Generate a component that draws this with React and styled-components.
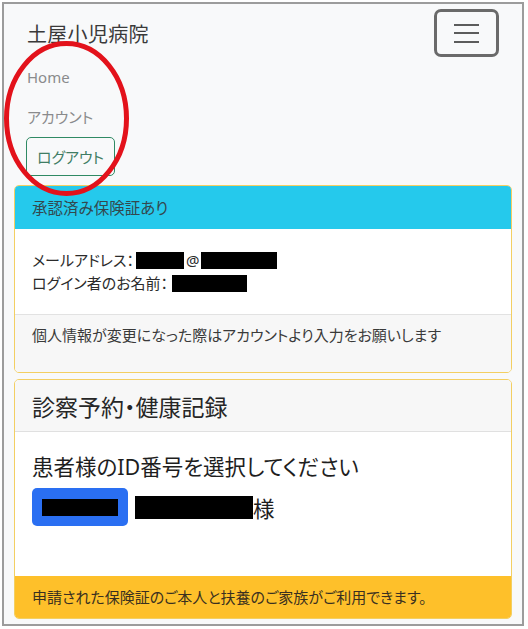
import React from "react";
import styled, { createGlobalStyle } from "styled-components";

const Global = createGlobalStyle`
  html, body { margin: 0; padding: 0; background: #ffffff; }
  body {
    font-family: "Noto Sans", "Noto Sans CJK JP", sans-serif;
    font-feature-settings: "palt";
    color: #212529;
  }
  * { box-sizing: border-box; }
`;

const Frame = styled.div`
  position: relative;
  margin: 2px 0 0 2px;
  width: 522px;
  height: 624px;
  border: 2px solid #9c9c9c;
  background: #f8f9fa;
  overflow: hidden;
`;

const Navbar = styled.nav`
  padding: 5px 23px 0 23px;
`;

const BrandRow = styled.div`
  display: flex;
  align-items: center;
  justify-content: space-between;
  height: 48px;
`;

const Brand = styled.span`
  font-size: 20px;
  line-height: 30px;
  padding-top: 3px;
  color: #3a3a3a;
  letter-spacing: 0.3px;
`;

const Toggler = styled.button`
  width: 65px;
  height: 48px;
  border: 3px solid #6a6a6a;
  border-radius: 7px;
  background: transparent;
  display: flex;
  flex-direction: column;
  align-items: center;
  justify-content: center;
  gap: 6.5px;
  padding: 0;
`;

const Bar = styled.span`
  display: block;
  width: 25px;
  height: 2px;
  background: #5c5c5c;
`;

const NavList = styled.div`
  display: flex;
  flex-direction: column;
  align-items: flex-start;
`;

const NavLink = styled.span`
  display: block;
  font-size: 15px;
  line-height: 24px;
  padding: 8px 0;
  color: #8a8b8c;
`;

const OutlineButton = styled.button`
  margin-left: -1px;
  height: 39px;
  width: 89px;
  padding: 0;
  border: 1px solid #2f8a64;
  border-radius: 5px;
  background: transparent;
  color: #3f7d64;
  font-family: inherit;
  font-feature-settings: "palt";
  font-size: 15px;
  text-align: center;
`;

const Content = styled.main`
  padding: 9px 10px 0 10px;
  display: flex;
  flex-direction: column;
  gap: 6px;
`;

const Card = styled.section`
  border: 1px solid #f3cf62;
  border-radius: 5px;
  background: #ffffff;
  overflow: hidden;
  display: flex;
  flex-direction: column;
`;

const CardHeader = styled.div`
  height: ${(p) => p.$h}px;
  display: flex;
  align-items: center;
  padding: 0 17px;
  background: ${(p) => p.$bg};
  border-bottom: 1px solid ${(p) => p.$line};
  font-size: ${(p) => p.$size}px;
  color: ${(p) => p.$color};
`;

const CardBody = styled.div`
  height: ${(p) => p.$h}px;
  padding: ${(p) => p.$pad};
`;

const CardFooter = styled.div`
  height: ${(p) => p.$h}px;
  padding: ${(p) => p.$pad};
  background: ${(p) => p.$bg};
  border-top: 1px solid ${(p) => p.$line};
  font-size: ${(p) => p.$size}px;
  line-height: 24px;
  color: ${(p) => p.$color};
`;

const InfoLine = styled.div`
  font-size: 15px;
  line-height: 23px;
  color: #2b2b2b;
  display: flex;
  align-items: center;
`;

const Redact = styled.span`
  display: inline-block;
  background: #000;
  width: ${(p) => p.$w}px;
  height: ${(p) => p.$h}px;
  margin-left: ${(p) => p.$ml || 0}px;
`;

const At = styled.span`
  margin: 0 2px;
`;

const Prompt = styled.div`
  font-size: 21.5px;
  line-height: 30px;
  color: #1e1e1e;
  font-weight: 400;
`;

const PatientRow = styled.div`
  margin-top: 6px;
  display: flex;
  align-items: center;
  font-size: 21.5px;
  color: #1e1e1e;
`;

const IdButton = styled.button`
  width: 96px;
  height: 38px;
  border: none;
  border-radius: 5px;
  background: #2a6ff2;
  display: flex;
  align-items: center;
  justify-content: center;
  padding: 0;
  margin-right: 7px;
`;

const Annotation = styled.svg`
  position: absolute;
  left: 0;
  top: 0;
  pointer-events: none;
`;

export default function App() {
  return (
    <>
      <Global />
      <Frame>
        <Navbar>
          <BrandRow>
            <Brand>土屋小児病院</Brand>
            <Toggler aria-label="menu">
              <Bar />
              <Bar />
              <Bar />
            </Toggler>
          </BrandRow>
          <NavList>
            <NavLink>Home</NavLink>
            <NavLink>アカウント</NavLink>
            <OutlineButton>ログアウト</OutlineButton>
          </NavList>
        </Navbar>
        <Content>
          <Card>
            <CardHeader $h={43} $bg="#25c9ec" $line="#25c9ec" $size={15.5} $color="#33484e">
              承認済み保険証あり
            </CardHeader>
            <CardBody $h={85} $pad="20px 17px 0 17px">
              <InfoLine>
                メールアドレス：
                <Redact $w={48} $h={17} $ml={2} />
                <At>@</At>
                <Redact $w={76} $h={17} />
              </InfoLine>
              <InfoLine>
                ログイン者のお名前：
                <Redact $w={75} $h={17} $ml={4} />
              </InfoLine>
            </CardBody>
            <CardFooter $h={58} $pad="8px 17px" $bg="#f7f7f7" $line="#e2e2e2" $size={15} $color="#3a3a3a">
              個人情報が変更になった際はアカウントより入力をお願いします
            </CardFooter>
          </Card>
          <Card>
            <CardHeader $h={52} $bg="#f7f7f7" $line="#e0e0e0" $size={23} $color="#262626">
              診察予約・健康記録
            </CardHeader>
            <CardBody $h={144} $pad="20px 17px 0 17px">
              <Prompt>患者様のID番号を選択してください</Prompt>
              <PatientRow>
                <IdButton>
                  <Redact $w={76} $h={17} />
                </IdButton>
                <Redact $w={118} $h={23} />
                様
              </PatientRow>
            </CardBody>
            <CardFooter $h={42} $pad="8px 17px" $bg="#fec02a" $line="#fec02a" $size={15} $color="#3a3020">
              申請された保険証のご本人と扶養のご家族がご利用できます。
            </CardFooter>
          </Card>
        </Content>
        <Annotation width="140" height="210">
          <ellipse cx="62.5" cy="114.5" rx="60" ry="75" fill="none" stroke="#e3121b" strokeWidth="5" />
        </Annotation>
      </Frame>
    </>
  );
}
